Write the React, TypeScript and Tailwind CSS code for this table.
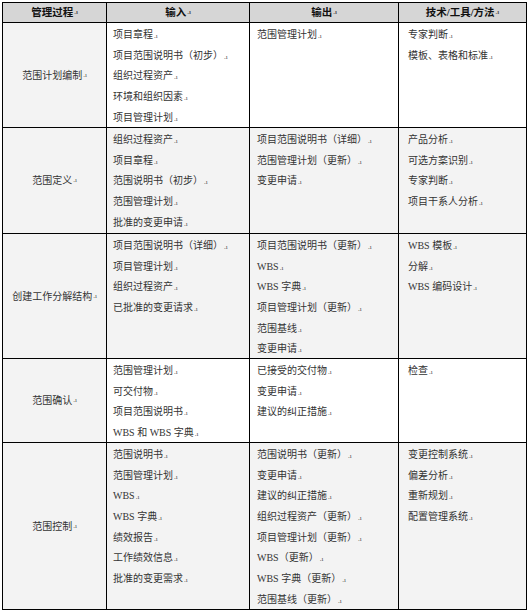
import React from "react";

type Row = { name: string; h: string; inputs: string[]; outputs: string[]; tools: string[]; gray: boolean };

const rows: Row[] = [
  {
    name: "范围计划编制",
    h: "h-[105px]",
    inputs: ["项目章程", "项目范围说明书（初步）", "组织过程资产", "环境和组织因素", "项目管理计划"],
    outputs: ["范围管理计划"],
    tools: ["专家判断", "模板、表格和标准"],
    gray: false,
  },
  {
    name: "范围定义",
    h: "h-[106px]",
    inputs: ["组织过程资产", "项目章程", "范围说明书（初步）", "范围管理计划", "批准的变更申请"],
    outputs: ["项目范围说明书（详细）", "范围管理计划（更新）", "变更申请"],
    tools: ["产品分析", "可选方案识别", "专家判断", "项目干系人分析"],
    gray: true,
  },
  {
    name: "创建工作分解结构",
    h: "h-[125px]",
    inputs: ["项目范围说明书（详细）", "项目管理计划", "组织过程资产", "已批准的变更请求"],
    outputs: ["项目范围说明书（更新）", "WBS", "WBS 字典", "项目管理计划（更新）", "范围基线", "变更申请"],
    tools: ["WBS 模板", "分解", "WBS 编码设计"],
    gray: true,
  },
  {
    name: "范围确认",
    h: "h-[84px]",
    inputs: ["范围管理计划", "可交付物", "项目范围说明书", "WBS 和 WBS 字典"],
    outputs: ["已接受的交付物", "变更申请", "建议的纠正措施"],
    tools: ["检查"],
    gray: false,
  },
  {
    name: "范围控制",
    h: "h-[167px]",
    inputs: ["范围说明书", "范围管理计划", "WBS", "WBS 字典", "绩效报告", "工作绩效信息", "批准的变更需求"],
    outputs: [
      "范围说明书（更新）",
      "变更申请",
      "建议的纠正措施",
      "组织过程资产（更新）",
      "项目管理计划（更新）",
      "WBS（更新）",
      "WBS 字典（更新）",
      "范围基线（更新）",
    ],
    tools: ["变更控制系统", "偏差分析", "重新规划", "配置管理系统"],
    gray: true,
  },
];

const Mark = () => <span className="text-[7px] text-[#555] ml-[1px]">.ı</span>;

function List({ items }: { items: string[] }) {
  return (
    <div className="flex flex-col pt-[2px]">
      {items.map((t, i) => (
        <div key={i} className="leading-[20.7px] h-[20.7px] whitespace-nowrap">
          {t}
          <Mark />
        </div>
      ))}
    </div>
  );
}

export default function App() {
  const font = { fontFamily: '"Liberation Serif", "Noto Sans CJK SC", serif' };
  return (
    <div className="w-[527px] h-[610px] bg-white pt-[2px] pl-[2px]" style={font}>
      <div className="grid grid-cols-[104px_143px_149px_128px] w-[525px] border-l border-t border-black text-[10px] text-[#333]">
        {["管理过程", "输入", "输出", "技术/工具/方法"].map((h, i) => (
          <div
            key={i}
            className="h-[20px] bg-[#d6d6d6] border-r border-b border-black flex items-center justify-center font-bold text-[10.5px] text-[#111]"
          >
            {h}
            <Mark />
          </div>
        ))}
        {rows.map((r, i) => {
          const bg = r.gray ? "bg-[#f3f3f3]" : "bg-white";
          return (
            <React.Fragment key={i}>
              <div className={`${r.h} bg-[#f3f3f3] border-r border-b border-black flex items-center justify-center`}>
                {r.name}
                <Mark />
              </div>
              <div className={`${r.h} ${bg} border-r border-b border-black pl-[6px]`}>
                <List items={r.inputs} />
              </div>
              <div className={`${r.h} ${bg} border-r border-b border-black pl-[7px]`}>
                <List items={r.outputs} />
              </div>
              <div className={`${r.h} ${bg} border-r border-b border-black pl-[9px]`}>
                <List items={r.tools} />
              </div>
            </React.Fragment>
          );
        })}
      </div>
    </div>
  );
}
